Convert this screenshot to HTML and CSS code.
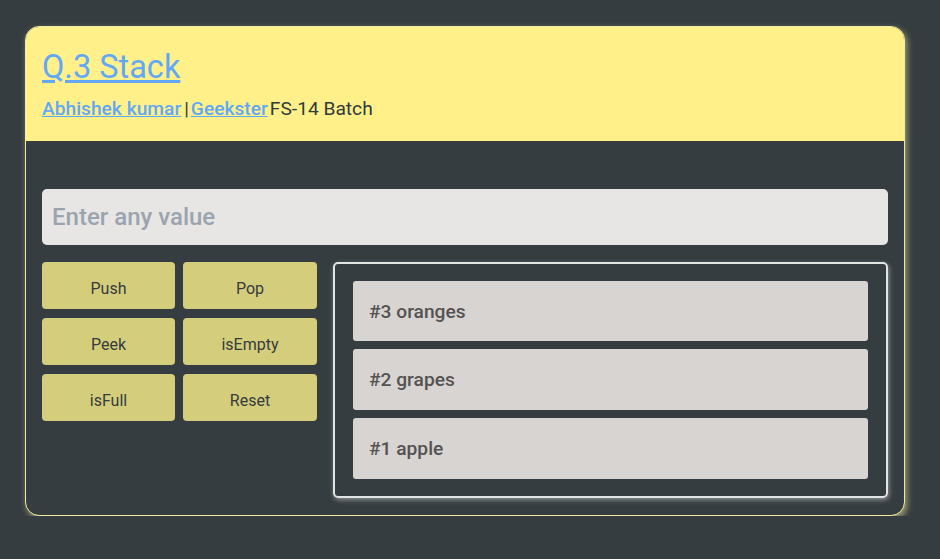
FILE: index.html
```html
<!DOCTYPE html>
<html>
<head>
<meta charset="utf-8">
<link rel="stylesheet" href="styles.css">
</head>
<body>
<div class="card">
  <header class="head">
    <h1 class="title"><a href="#">Q.3 Stack</a></h1>
    <p class="sub"><a class="link" href="#">Abhishek kumar</a><span class="sep">|</span><a class="link" href="#">Geekster</a><span class="batch">FS-14 Batch</span></p>
  </header>
  <main class="body">
    <input class="field" type="text" placeholder="Enter any value">
    <div class="row">
      <div class="btns">
        <button class="btn">Push</button>
        <button class="btn">Pop</button>
        <button class="btn">Peek</button>
        <button class="btn">isEmpty</button>
        <button class="btn">isFull</button>
        <button class="btn">Reset</button>
      </div>
      <div class="stack">
        <div class="item">#3 oranges</div>
        <div class="item">#2 grapes</div>
        <div class="item">#1 apple</div>
      </div>
    </div>
  </main>
</div>
</body>
</html>
```
FILE: styles.css
```css
* { box-sizing: border-box; }
html, body { margin: 0; }
body {
  background: #353d40;
  padding: 26px 35px 0 25px;
  font-family: Roboto, "Noto Sans", sans-serif;
}
.card {
  width: 880px;
  height: 490px;
  border: 1px solid #f3eca0;
  border-radius: 14px;
  overflow: hidden;
  background: #353d40;
  box-shadow: 2px 3px 6px rgba(250, 240, 160, 0.55);
}
.head {
  background: #fff08a;
  height: 114px;
  padding: 21px 16px 0 16px;
}
.title {
  margin: 0;
  font-size: 32.5px;
  font-weight: 400;
  line-height: 38px;
}
.title a, .sub a {
  color: #62a8f7;
  text-decoration: underline;
}
.sub {
  margin: 10px 0 0 0;
  font-size: 19.2px;
  color: #2f3a3d;
  line-height: 26px;
}
.sub .link { font-weight: 500; }
.sep { margin: 0 2px 0 3px; }
.batch { margin-left: 2px; }
.body {
  padding: 48px 16px 0 16px;
}
.field {
  display: block;
  width: 100%;
  height: 56px;
  border: none;
  border-radius: 5px;
  background: #e7e6e5;
  padding: 0 10px;
  font-family: inherit;
  font-size: 24px;
  font-weight: 500;
  outline: none;
}
.field::placeholder { color: #9ba4ae; }
.row {
  display: flex;
  gap: 16px;
  margin-top: 17px;
  align-items: flex-start;
}
.btns {
  width: 275px;
  display: grid;
  grid-template-columns: 133px 134px;
  grid-auto-rows: 47px;
  column-gap: 8px;
  row-gap: 9px;
}
.btn {
  border: none;
  border-radius: 4px;
  background: #d4cd7b;
  color: #353c3f;
  font-family: inherit;
  font-size: 16px;
  font-weight: 400;
  padding: 5px 0 0 0;
}
.stack {
  flex: 1;
  border: 2px solid #e4e4e4;
  border-radius: 5px;
  padding: 17px 18px 17px 18px;
  display: flex;
  flex-direction: column;
  gap: 8px;
  box-shadow: 1px 2px 5px rgba(230, 230, 230, 0.5);
}
.item {
  height: 60px;
  background: #d8d4d1;
  border-radius: 3px;
  padding: 0 16px;
  display: flex;
  align-items: center;
  font-size: 19.2px;
  font-weight: 500;
  color: #545252;
}
.item:nth-child(2), .item:nth-child(3) { height: 61px; }
```
